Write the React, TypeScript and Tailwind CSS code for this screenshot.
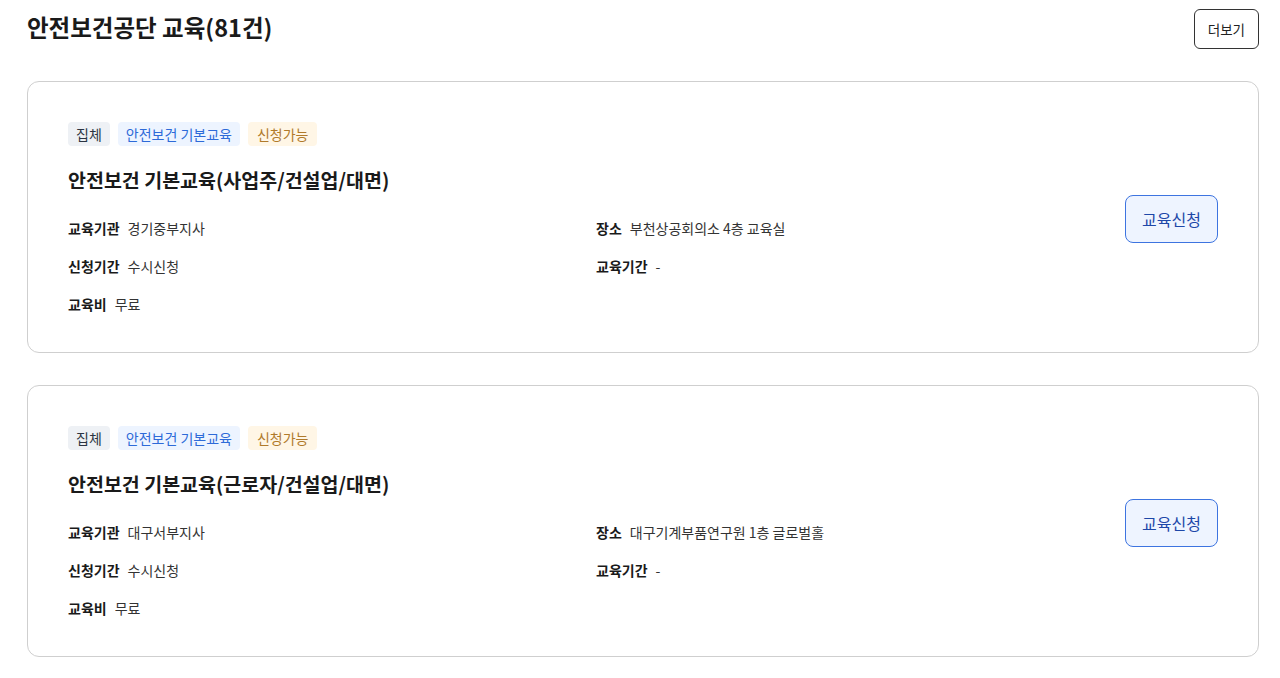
const courses = [
  {
    title: '안전보건 기본교육(사업주/건설업/대면)',
    org: '경기중부지사',
    place: '부천상공회의소 4층 교육실',
    apply: '수시신청',
    period: '-',
    fee: '무료',
  },
  {
    title: '안전보건 기본교육(근로자/건설업/대면)',
    org: '대구서부지사',
    place: '대구기계부품연구원 1층 글로벌홀',
    apply: '수시신청',
    period: '-',
    fee: '무료',
  },
];

function Info({ label, value }: { label: string; value: string }) {
  return (
    <div className="flex items-center gap-2 text-[14px] leading-5">
      <span className="font-bold text-[#1a1a1a]">{label}</span>
      <span className="text-[#333]">{value}</span>
    </div>
  );
}

export default function App() {
  return (
    <div
      className="bg-white pl-[27px] pr-[21px] pt-[9px] pb-2"
      style={{ fontFamily: '"Noto Sans CJK KR", "Noto Sans", sans-serif' }}
    >
      <div className="flex items-start justify-between">
        <h2 className="mt-[2px] text-[23.5px] leading-8 font-bold text-[#1a1a1a]">
          안전보건공단 교육(81건)
        </h2>
        <button className="h-[40px] rounded-md border border-[#333] px-[13px] text-[13.5px] text-[#222]">
          더보기
        </button>
      </div>

      <div className="mt-[32px] flex flex-col gap-[32px]">
        {courses.map((c) => (
          <div
            key={c.title}
            className="flex items-center rounded-xl border border-[#cfcfcf] pt-[40px] pb-[38px] pl-[40px] pr-[40px]"
          >
            <div className="flex-1">
              <div className="flex gap-2">
                <span className="rounded-[4px] bg-[#eef1f5] px-2 text-[14px] leading-6 text-[#2b3442]">
                  집체
                </span>
                <span className="rounded-[4px] bg-[#edf4ff] px-2 text-[14px] leading-6 text-[#2d6ad8]">
                  안전보건 기본교육
                </span>
                <span className="rounded-[4px] bg-[#fff6e6] px-[9px] text-[14px] leading-6 text-[#b07a2a]">
                  신청가능
                </span>
              </div>
              <h3 className="mt-[20px] text-[19.5px] leading-7 font-bold text-[#1a1a1a]">
                {c.title}
              </h3>
              <div className="mt-[24px] grid grid-cols-[528px_1fr] gap-y-[18px]">
                <Info label="교육기관" value={c.org} />
                <Info label="장소" value={c.place} />
                <Info label="신청기간" value={c.apply} />
                <Info label="교육기간" value={c.period} />
                <Info label="교육비" value={c.fee} />
              </div>
            </div>
            <button className="mt-[2px] h-[48px] w-[93px] rounded-lg border border-[#3d74e0] bg-[#eef4ff] text-[16px] text-[#1d47a8]">
              교육신청
            </button>
          </div>
        ))}
      </div>
    </div>
  );
}
